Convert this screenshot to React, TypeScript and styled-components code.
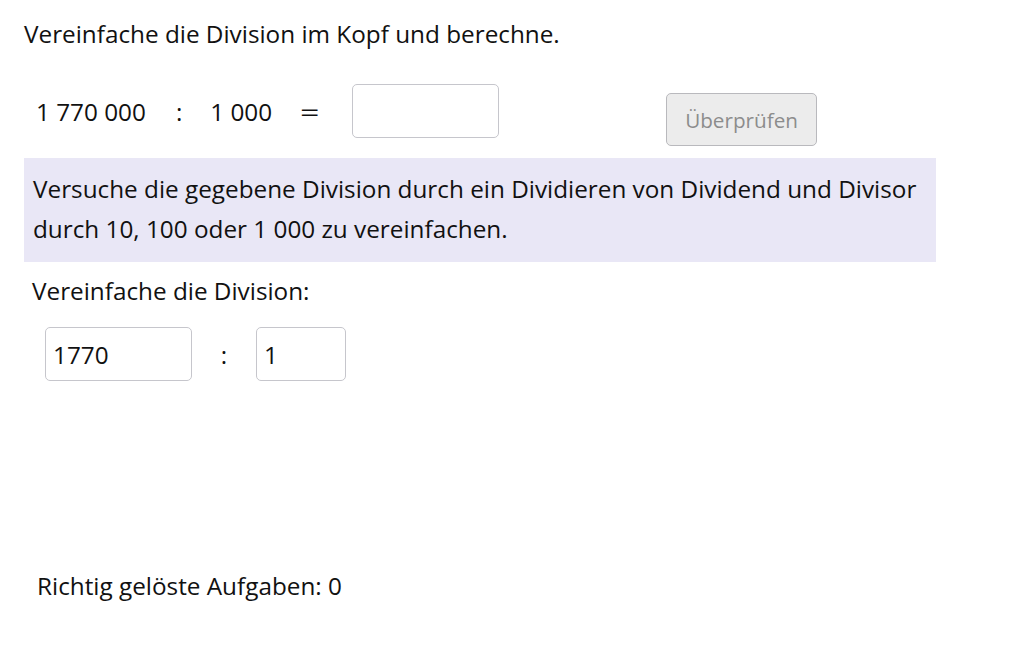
import styled, { createGlobalStyle } from "styled-components";

const GlobalStyle = createGlobalStyle`
  body {
    margin: 0;
    background: #ffffff;
    color: #111111;
    font-family: "Open Sans", "Liberation Sans", sans-serif;
  }
`;

const Page = styled.div`
  width: 1032px;
  height: 645px;
  padding: 19px 0 0 24px;
  box-sizing: border-box;
  display: flex;
  flex-direction: column;
`;

const Title = styled.div`
  font-size: 24.3px;
  line-height: 30px;
`;

const TaskRow = styled.div`
  display: flex;
  align-items: flex-start;
  margin-top: 35px;
  padding-left: 12px;
  height: 64px;
`;

const Term = styled.span<{ $gap?: number }>`
  font-size: 24.3px;
  line-height: 30px;
  margin-top: 13px;
  margin-right: ${(p) => p.$gap ?? 0}px;
  white-space: pre;
`;

const Equals = styled(Term)`
  display: inline-block;
  transform: scaleX(1.4);
  transform-origin: left center;
`;

const Box = styled.input<{ $w: number }>`
  width: ${(p) => p.$w}px;
  height: 54px;
  box-sizing: border-box;
  border: 1px solid #c6c6cc;
  border-radius: 5px;
  background: #ffffff;
  padding: 0 7px;
  font-family: "Open Sans", "Liberation Sans", sans-serif;
  font-size: 24.3px;
  color: #111111;
  outline: none;
`;

const CheckButton = styled.button`
  margin-left: 167px;
  margin-top: 9px;
  width: 151px;
  height: 53px;
  box-sizing: border-box;
  border: 1px solid #b9b9bd;
  border-radius: 5px;
  background: #ececec;
  color: #8c8c8c;
  font-family: "Open Sans", "Liberation Sans", sans-serif;
  font-size: 20.7px;
  padding: 0;
`;

const Hint = styled.div`
  margin-top: 10px;
  width: 912px;
  height: 104px;
  box-sizing: border-box;
  padding: 11px 9px;
  background: #e9e7f6;
  font-size: 24.3px;
  line-height: 40px;
`;

const SubTitle = styled.div`
  font-size: 24.3px;
  line-height: 30px;
  margin-top: 14px;
  padding-left: 8px;
`;

const SimplifyRow = styled.div`
  display: flex;
  align-items: center;
  margin-top: 21px;
  padding-left: 21px;
`;

const Colon = styled.span`
  font-size: 24.3px;
  width: 64px;
  text-align: center;
`;

const Footer = styled.div`
  font-size: 24.3px;
  line-height: 30px;
  margin-top: auto;
  margin-bottom: 44px;
  padding-left: 13px;
`;

export default function App() {
  return (
    <>
      <GlobalStyle />
      <Page>
        <Title>Vereinfache die Division im Kopf und berechne.</Title>
        <TaskRow>
          <Term $gap={30}>1 770 000</Term>
          <Term $gap={28}>:</Term>
          <Term $gap={28}>1 000</Term>
          <Equals $gap={38}>=</Equals>
          <Box $w={147} />
          <CheckButton>Überprüfen</CheckButton>
        </TaskRow>
        <Hint>
          Versuche die gegebene Division durch ein Dividieren von Dividend und Divisor
          <br />
          durch 10, 100 oder 1 000 zu vereinfachen.
        </Hint>
        <SubTitle>Vereinfache die Division:</SubTitle>
        <SimplifyRow>
          <Box $w={147} defaultValue="1770" />
          <Colon>:</Colon>
          <Box $w={90} defaultValue="1" />
        </SimplifyRow>
        <Footer>Richtig gelöste Aufgaben: 0</Footer>
      </Page>
    </>
  );
}
